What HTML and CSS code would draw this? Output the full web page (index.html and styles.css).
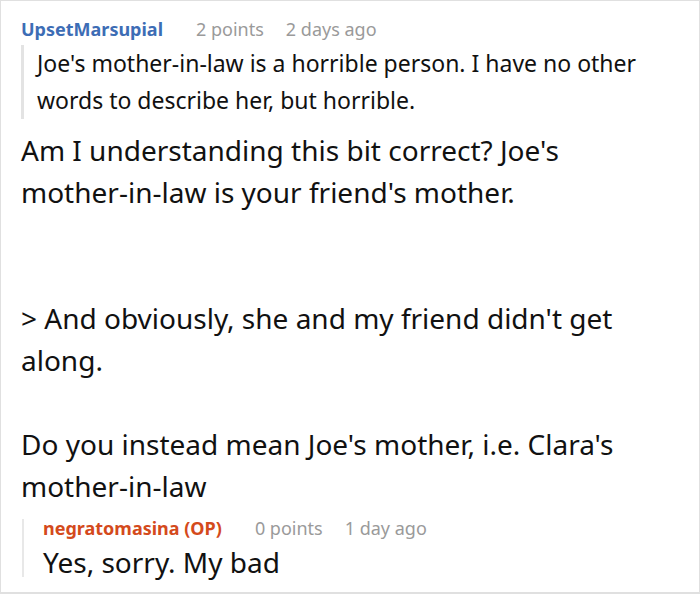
FILE: index.html
```html
<!DOCTYPE html>
<html lang="en">
<head>
<meta charset="utf-8">
<title>Comment thread</title>
<link rel="stylesheet" href="styles.css">
</head>
<body>
<div class="card">
  <div class="meta">
    <span class="author">UpsetMarsupial</span>
    <span class="points">2 points</span>
    <span class="time">2 days ago</span>
  </div>
  <blockquote class="quote">Joe's mother-in-law is a horrible person. I have no other words to describe her, but horrible.</blockquote>
  <div class="body">
    Am I understanding this bit correct? Joe's mother-in-law is your friend's mother.<br><br><br>&gt; And obviously, she and my friend didn't get along.<br><br>Do you instead mean Joe's mother, i.e. Clara's mother-in-law
  </div>
  <div class="reply">
    <div class="meta meta-reply">
      <span class="author op">negratomasina (OP)</span>
      <span class="points">0 points</span>
      <span class="time">1 day ago</span>
    </div>
    <div class="reply-body">Yes, sorry. My bad</div>
  </div>
</div>
</body>
</html>
```

FILE: styles.css
```css
* { box-sizing: border-box; }
html, body { margin: 0; padding: 0; background: #fff; }
body { font-family: "Noto Sans", "Open Sans", sans-serif; color: #111; }

.card {
  width: 700px;
  height: 594px;
  border: 1px solid #e0e0e0;
  border-bottom-width: 2px;
  padding: 16px 45px 0 20px;
  overflow: hidden;
}

.meta {
  display: flex;
  align-items: baseline;
  font-size: 18px;
  line-height: 24px;
  white-space: nowrap;
}
.author { font-weight: 700; color: #3d6db5; margin-right: 33px; }
.author.op { color: #d44a1c; }
.points { color: #9a9a9a; margin-right: 22px; }
.time { color: #9a9a9a; }

.quote {
  margin: 4px 0 0 0;
  border-left: 3px solid #e3e3e3;
  padding-left: 13px;
  font-size: 23px;
  line-height: 37px;
}

.body {
  margin-top: 10px;
  font-size: 28px;
  line-height: 42px;
}

.reply {
  margin-top: 12px;
  margin-left: 1px;
  border-left: 2px solid #e8e8e8;
  padding-left: 19px;
}
.meta-reply { line-height: 18px; }
.reply-body {
  margin-top: 10px;
  font-size: 28px;
  line-height: 30px;
}
```
